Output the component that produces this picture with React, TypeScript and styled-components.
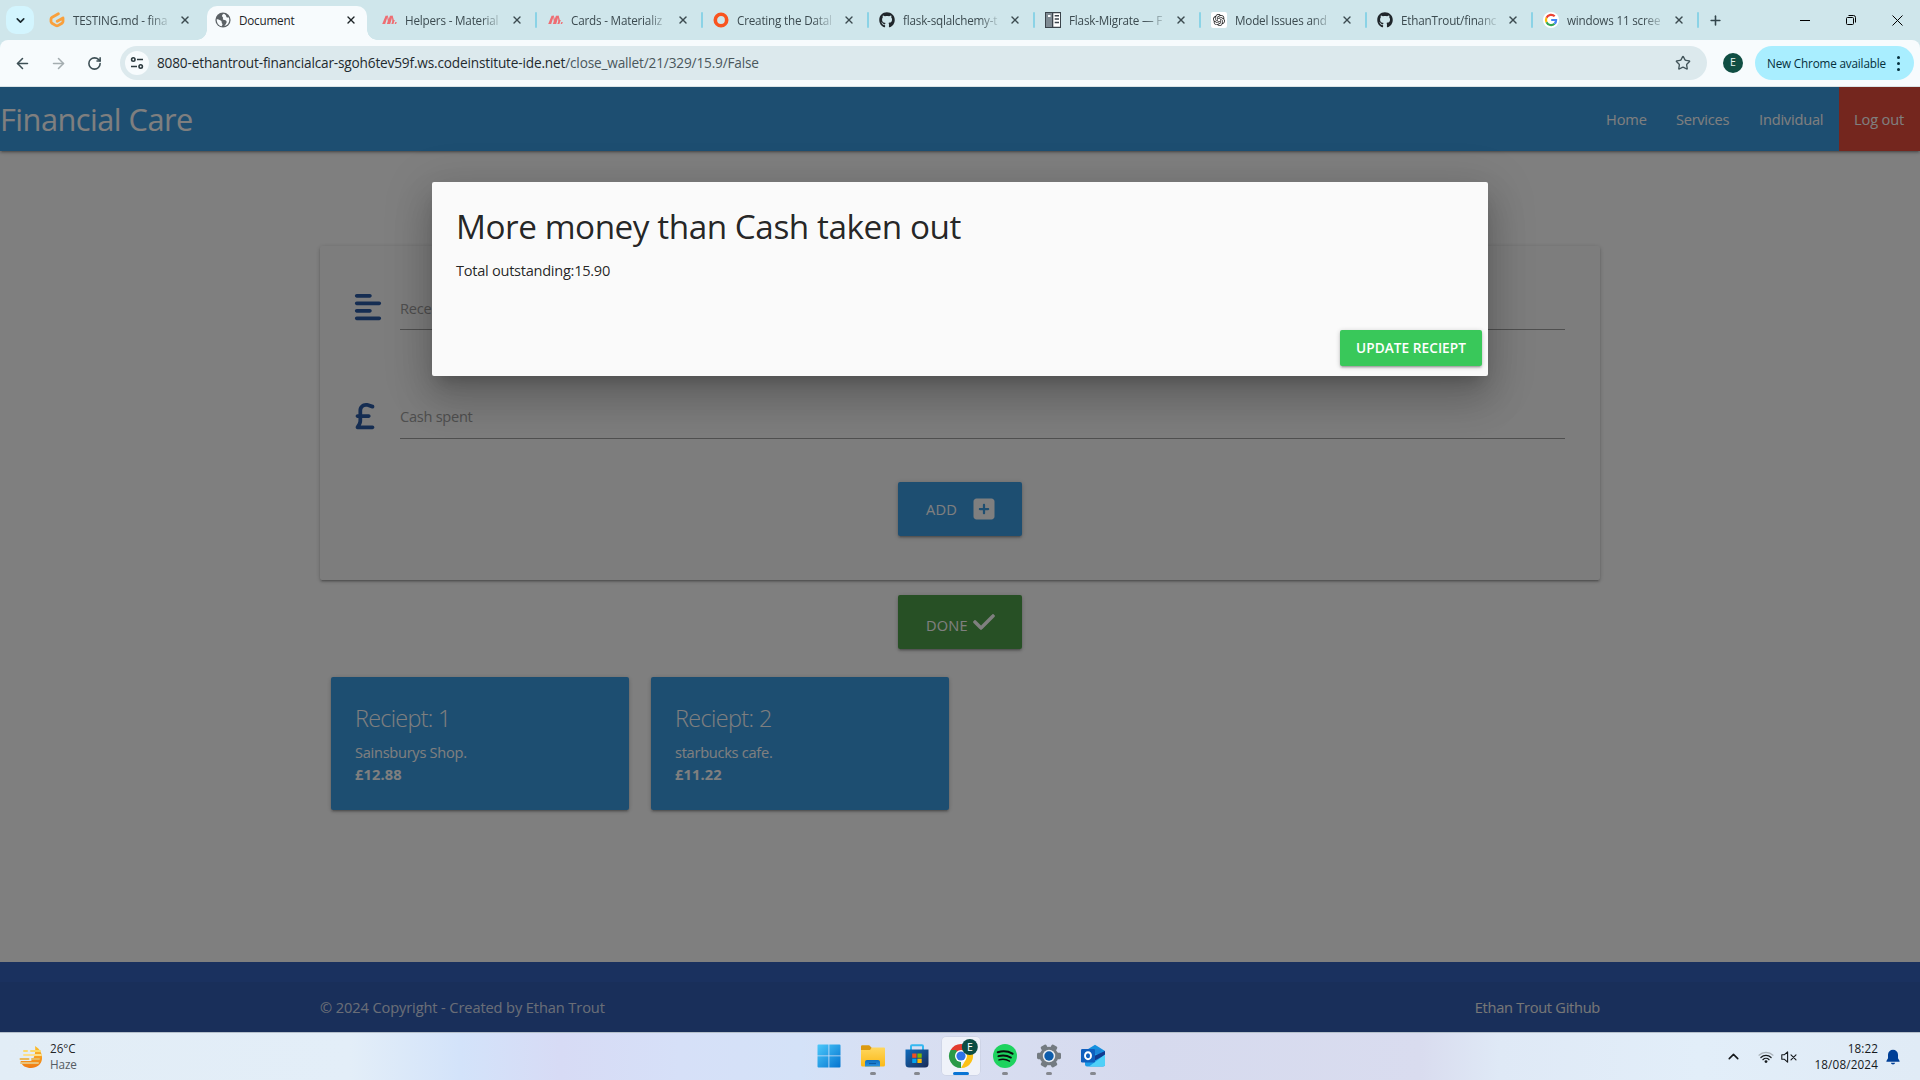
import React from "react";
import styled, { createGlobalStyle } from "styled-components";
import { FaAlignLeft, FaSterlingSign, FaSquarePlus, FaCheck, FaGithub } from "react-icons/fa6";
import { SiOpenai } from "react-icons/si";
import { ArrowLeft, ArrowRight, RotateCw, Star, ChevronDown, ChevronUp, Plus, X } from "lucide-react";

const Global = createGlobalStyle`
  *{box-sizing:border-box}
  html,body{margin:0;padding:0;overflow:hidden}
  body{font-family:"Segoe UI","Open Sans","Noto Sans",sans-serif;font-size:15px;line-height:22.5px;color:rgba(0,0,0,.87);width:1920px;height:1080px}
  svg{display:block;flex:none}
`;

/* Open Sans runs slightly larger than its nominal size, so text is scaled down a touch */
const T = styled.span<{ $s?: number; $ls?: number; $w?: number; $c?: string }>`
  font-size:${p => (p.$s ?? 15) * 0.975}px;
  letter-spacing:${p => p.$ls ?? -0.28}px;
  font-weight:${p => p.$w ?? 400};
  ${p => p.$c && `color:${p.$c};`}
  white-space:nowrap;
`;

const Screen = styled.div`width:1920px;height:1080px;display:flex;flex-direction:column;overflow:hidden;`;

/* browser chrome */
const TabStrip = styled.div`height:40px;background:#cfe6eb;display:flex;align-items:flex-end;padding-left:6px;`;
const TabSearch = styled.div`width:28px;height:28px;border-radius:10px;background:#d3f5fe;margin:0 4px 6px 0;display:flex;align-items:center;justify-content:center;color:#1b2a2f;`;
const TabSlot = styled.div<{ $sep?: boolean }>`
  width:166px;height:40px;padding:6px 3px 0;position:relative;
  ${p => p.$sep && `&::after{content:"";position:absolute;right:-1px;top:12px;width:2px;height:16px;background:#8bd3e6;border-radius:1px;}`}
`;
const TabBody = styled.div<{ $on?: boolean }>`
  height:34px;padding:0 8px 6px;display:flex;align-items:center;position:relative;border-radius:10px 10px 0 0;
  color:${p => (p.$on ? "#1d2427" : "#3c4b50")};
  background:${p => (p.$on ? "#f7fbfd" : "transparent")};
  ${p => p.$on && `
    &::before,&::after{content:"";position:absolute;bottom:0;width:10px;height:10px;}
    &::before{left:-10px;background:radial-gradient(circle at 0 0,transparent 9.5px,#f7fbfd 10px);}
    &::after{right:-10px;background:radial-gradient(circle at 100% 0,transparent 9.5px,#f7fbfd 10px);}
  `}
`;
const Favicon = styled.div`width:16px;height:16px;margin-right:8px;display:flex;align-items:center;justify-content:center;`;
const TabTitle = styled.div<{ $on?: boolean }>`
  width:97px;height:18px;line-height:17px;white-space:nowrap;margin-right:9px;
  ${p => !p.$on && "mask-image:linear-gradient(90deg,#000 76px,transparent 99px);"}
`;
const NewTab = styled.div`width:34px;height:40px;display:flex;align-items:center;justify-content:center;color:#33464c;`;
const WinButtons = styled.div`margin-left:auto;display:flex;height:40px;`;
const WinBtn = styled.div`width:46px;height:40px;display:flex;align-items:center;justify-content:center;`;

const ToolbarWrap = styled.div`height:47px;background:#cfe6eb;`;
const Toolbar = styled.div`height:47px;background:#f7fbfd;border-bottom:1px solid #d9e3e6;display:flex;align-items:center;border-radius:8px 8px 0 0;padding-left:4px;color:#42545a;`;
const NavBtn = styled.div<{ $dim?: boolean }>`width:36px;height:34px;display:flex;align-items:center;justify-content:center;color:${p => (p.$dim ? "#a4adb0" : "#3d4f55")};`;
const Omnibox = styled.div`width:1587px;height:34px;flex:none;border-radius:17px;margin-left:8px;background:#dce9ed;display:flex;align-items:center;padding:0 16px 0 5px;`;
const Tune = styled.div`width:24px;height:24px;border-radius:50%;background:#f7fbfd;margin-right:8px;display:flex;align-items:center;justify-content:center;`;
const Grow = styled.div`flex:1;`;
const Profile = styled.div`width:20px;height:20px;border-radius:50%;background:#104e43;margin:0 12px 0 16px;color:#e8f2f0;font-size:10.5px;line-height:19px;text-align:center;`;
const UpdatePill = styled.div`width:159px;height:34px;border-radius:17px;background:#a9eeff;display:flex;align-items:center;padding-left:12px;color:#05303c;`;
const Dots = styled.div`margin:0 14px 0 auto;display:grid;gap:3px;i{width:3px;height:3px;border-radius:50%;background:#05303c;}`;

/* site */
const Page = styled.div`height:945px;position:relative;background:#fff;overflow:hidden;display:flex;flex-direction:column;align-items:center;`;
const depth1 = "0 2px 2px 0 rgba(0,0,0,.14),0 3px 1px -2px rgba(0,0,0,.12),0 1px 5px 0 rgba(0,0,0,.2)";
const SiteNav = styled.nav`width:100%;height:64px;flex:none;background:#3b9ce2;color:#fff;display:flex;align-items:center;box-shadow:${depth1};`;
const Brand = styled.div`height:64px;line-height:65px;`;
const NavLink = styled.div<{ $w: number; $bg?: string }>`width:${p => p.$w}px;height:64px;padding-left:15px;line-height:64px;background:${p => p.$bg ?? "transparent"};`;
const FormCard = styled.section`width:1280px;height:334px;flex:none;margin-top:95px;background:#fafafa;border-radius:2px;box-shadow:${depth1};padding:47px 35px 0;display:flex;flex-direction:column;align-items:center;`;
const Field = styled.div`width:1210px;height:37px;display:flex;margin-bottom:72px;color:#2a5aa4;`;
const FieldIcon = styled.div<{ $pull: number }>`width:45px;svg{margin:-1px 0 0 -${p => p.$pull}px;}`;
const FieldInput = styled.div<{ $top: number }>`flex:1;border-bottom:1px solid #9e9e9e;color:#9e9e9e;padding-top:${p => p.$top}px;`;
const BigBtn = styled.div<{ $bg: string }>`width:124px;height:54px;flex:none;border-radius:2px;background:${p => p.$bg};color:#fff;box-shadow:${depth1};display:flex;align-items:center;justify-content:space-between;padding:0 26.5px 0 28px;`;
const AddRow = styled.div`margin-top:-29px;`;
const DoneRow = styled.div`margin-top:15px;path{stroke:currentColor;stroke-width:16px;}`;
const Lower = styled.div`padding-top:6px;display:flex;`;
const Receipts = styled.section`width:1280px;display:flex;margin-top:28px;padding:0 11px;gap:22px;`;
const Receipt = styled.div`width:298px;height:133px;border-radius:2px;background:#3b9ce2;color:#fff;box-shadow:${depth1};padding:24px;display:flex;flex-direction:column;line-height:22px;`;
const ReceiptTitle = styled.div`height:40px;line-height:34px;`;
const Footer = styled.footer`width:100%;height:70px;margin-top:auto;background:#3462bf;padding-top:20px;`;
const FooterBar = styled.div`height:50px;background:rgba(51,51,51,.08);padding:14px 320px 0;display:flex;justify-content:space-between;`;
const Overlay = styled.div`position:absolute;inset:0;background:rgba(0,0,0,.5);`;
const Modal = styled.div`position:absolute;left:432px;top:95px;width:1056px;height:194px;border-radius:2px;background:#fafafa;display:flex;flex-direction:column;box-shadow:0 24px 38px 3px rgba(0,0,0,.14),0 9px 46px 8px rgba(0,0,0,.12),0 11px 15px -7px rgba(0,0,0,.2);`;
const ModalBody = styled.div`height:138px;padding:24px;display:flex;flex-direction:column;gap:15px;`;
const ModalTitle = styled.div`height:38px;line-height:38px;padding-top:1px;`;
const ModalFoot = styled.div`height:56px;padding:10px 6px;display:flex;justify-content:flex-end;`;
const UpdateBtn = styled.div`width:142px;height:36px;border-radius:2px;background:#39c85a;color:#fff;line-height:35px;text-align:center;box-shadow:${depth1};`;

/* taskbar */
const Taskbar = styled.div`height:48px;border-top:1px solid #b5c0cb;display:flex;align-items:center;justify-content:space-between;
  background:linear-gradient(90deg,#e2edf6 0,#e3eef8 350px,#d3e3fa 460px,#d7dbf5 560px,#d6e0f8 680px,#d4e2f8 800px,#d8dff2 900px,#d6daee 1150px,#d9dcef 1420px,#dfe9f6 1500px,#e2eef9 1700px,#e0ebf6 1920px);`;
const Weather = styled.div`width:808px;height:47px;display:flex;align-items:center;padding-left:19px;gap:7px;`;
const Tray = styled.div`width:806px;height:47px;display:flex;align-items:center;justify-content:flex-end;padding-right:20px;color:#15191c;`;
const TrayIcons = styled.div`display:flex;align-items:center;gap:7px;margin:0 17px 0 16px;`;
const Lines = styled.div<{ $right?: boolean }>`display:flex;flex-direction:column;line-height:16px;padding-bottom:1px;text-align:${p => (p.$right ? "right" : "left")};`;
const Bell = styled.div`margin-left:8px;`;
const Apps = styled.div`display:flex;gap:6px;height:47px;padding-top:4px;`;
const AppTile = styled.div<{ $on?: boolean; $run?: boolean }>`
  width:38px;height:38px;border-radius:4px;display:flex;align-items:center;justify-content:center;position:relative;
  ${p => p.$on && "background:rgba(255,255,255,.6);box-shadow:0 0 0 .5px rgba(0,0,0,.08);"}
  ${p => p.$run && `&::after{content:"";position:absolute;bottom:0;left:50%;transform:translateX(-50%);height:3px;border-radius:2px;width:${p.$on ? 16 : 6}px;background:${p.$on ? "#0a74d4" : "#85888f"};}`}
`;

const Materialize = () => (
  <svg width="16" height="16" viewBox="0 0 16 16" fill="#ee6e73"><path d="M1.2 12 4.600 3.800h2.200L4.200 12zM5.800 12 9 3.800h2.600L9.200 12zM10.300 12l1.700-4h1.800l-1.400 4zM13.600 12l.8-2h1.400l-.7 2z" /><path d="M6 3.800h.8L8.300 9 7.200 11.500zM10.800 3.800h.8l1.200 4-1.300 3z" /></svg>
);
const Gitpod = () => (
  <svg width="16" height="16" viewBox="0 0 16 16" fill="none" stroke="#f9a03c" strokeWidth="2.800" strokeLinecap="round" strokeLinejoin="round"><path d="M9.400 1.800 3.200 5.200Q2 5.900 2 7v2.600q0 1 1 1.600l4 2.400q1 .5 2 0l4-2.400q1-.6 1-1.600V6L8.200 9.200" /></svg>
);
const Globe = () => (
  <svg width="16" height="16" viewBox="0 0 16 16"><circle cx="8" cy="8" r="7.600" fill="#5b6165" /><path d="M8.800 1.800C6.800 3 6.500 4 7.700 5.200c1.200 1-.8 1.700.8 2.600 1.500.6 2.800.3 3.100 1.800.3 1.800-1.200 3-2.300 4.500 3-.5 5-3.200 5-6.100 0-1-.2-2-.6-2.800-1.200.5-2.400.3-2.500-1 0-1-.9-1.600-2.400-2.400zM1.700 7.200c1.500 0 3.300.6 4.400 1.500s.1 2.100 1.200 3c.6.6-.3 1.900-.7 2.500-3-.6-5-3.200-4.900-7z" fill="#f7fbfd" /></svg>
);
const Ring = () => <svg width="16" height="16" viewBox="0 0 16 16"><ellipse cx="8" cy="8" rx="5.700" ry="5.800" fill="none" stroke="#f9541f" strokeWidth="3.600" /></svg>;
const Docs = () => (
  <svg width="16" height="16" viewBox="0 0 16 16"><path d="M0 0h16v16H0z" fill="#3b444b" /><path d="M1 1h6v14H1z" fill="#7f8b93" /><path d="M8.300 1.300H15v13.400H8.300zM3 3h2.500v2H3z" fill="#fff" /><path d="M9.700 3H14v1.400H9.700zM9.700 6.300H14v1.400H9.700zM9.700 9.800H14v1.400H9.700z" fill="#3b444b" /></svg>
);
const GptTile = styled.div`width:16px;height:16px;border-radius:2px;background:#fff;display:flex;align-items:center;justify-content:center;`;
const Gpt = () => <GptTile><SiOpenai size={12} color="#222" /></GptTile>;
const Google = () => (
  <svg width="16" height="16" viewBox="0 0 16 16"><circle cx="8" cy="8" r="8" fill="#fff" /><g fill="none" strokeWidth="2.200"><path d="M11.700 4.300A5.100 5.100 0 0 0 3.500 5.700" stroke="#ea4335" /><path d="M3.500 5.700a5.100 5.100 0 0 0 0 4.600" stroke="#fbbc05" /><path d="M3.500 10.300a5.100 5.100 0 0 0 8 1.500" stroke="#34a853" /><path d="M11.500 11.800A5 5 0 0 0 13.100 8H8.200" stroke="#4285f4" /></g></svg>
);
const Octo = () => <FaGithub size={16} color="#20262b" />;

const tabs: [string, () => React.ReactElement, boolean][] = [
  ["TESTING.md - fina", Gitpod, false],
  ["Document", Globe, false],
  ["Helpers - Material", Materialize, true],
  ["Cards - Materializ", Materialize, true],
  ["Creating the Datal", Ring, true],
  ["flask-sqlalchemy-t", Octo, true],
  ["Flask-Migrate — F", Docs, true],
  ["Model Issues and", Gpt, true],
  ["EthanTrout/financ", Octo, true],
  ["windows 11 scree", Google, true],
];

const WinLogo = () => (
  <svg width="24" height="24" viewBox="0 0 24 24"><defs><linearGradient id="wl" x1="0" y1="0" x2="1" y2="1"><stop offset="0" stopColor="#4cc9fb" /><stop offset="1" stopColor="#0473cf" /></linearGradient></defs><path fill="url(#wl)" d="M1.500.5h10v11H.5v-10a1 1 0 0 1 1-1zM12.300.5h10.200a1 1 0 0 1 1 1v10H12.300zM.5 12.300h11v11.200h-10a1 1 0 0 1-1-1zM12.300 12.300h11.200v10.200a1 1 0 0 1-1 1H12.300z" /></svg>
);
const Folder = () => (
  <svg width="24" height="24" viewBox="0 0 24 24"><defs><linearGradient id="fo" x1="0" y1="0" x2="0" y2="1"><stop offset="0" stopColor="#ffd75e" /><stop offset="1" stopColor="#fbb917" /></linearGradient><linearGradient id="fb" x1="0" y1="0" x2="0" y2="1"><stop offset="0" stopColor="#0f6fc0" /><stop offset="1" stopColor="#2a93e0" /></linearGradient></defs><path d="M0 2.500A1.200 1.200 0 0 1 1.200 1.300h7l2.500 2.500v4H0z" fill="#dc9a10" /><path d="M0 6h9l2-2.500h12a1 1 0 0 1 1 1V21a1.500 1.500 0 0 1-1.500 1.500h-21A1.500 1.500 0 0 1 0 21z" fill="url(#fo)" /><path d="M4 22.500V18a2 2 0 0 1 2-2h11a2 2 0 0 1 2 2v4.500z" fill="url(#fb)" /><path d="M8 19.500h7" stroke="#0a5aa5" strokeWidth="1.200" /></svg>
);
const Store = () => (
  <svg width="24" height="24" viewBox="0 0 24 24"><defs><linearGradient id="st" x1="0" y1="0" x2="1" y2="1"><stop offset="0" stopColor="#0f6cbd" /><stop offset="1" stopColor="#1b2a55" /></linearGradient></defs><path d="M6 6V2.200a1 1 0 0 1 1-1h10a1 1 0 0 1 1 1V6" fill="none" stroke="#35b8f1" strokeWidth="2" /><path d="M.5 5.500h23V20a3.500 3.500 0 0 1-3.500 3.500H4A3.500 3.500 0 0 1 .5 20z" fill="url(#st)" /><path d="M7.200 9.500h4.300v4.300H7.200z" fill="#f25022" /><path d="M12.400 9.500h4.300v4.300h-4.300z" fill="#7fba00" /><path d="M7.200 14.700h4.300V19H7.200z" fill="#00a4ef" /><path d="M12.400 14.700h4.300V19h-4.300z" fill="#ffb900" /></svg>
);
const Chrome = () => (
  <svg width="36" height="36" viewBox="-2 -2 36 36"><path d="M16 16 5.600 10A12 12 0 0 1 26.400 10z" fill="#e33b2e" /><path d="M16 16V28A12 12 0 0 1 5.600 10z" fill="#2a9a47" /><path d="M16 10h10.400A12 12 0 0 1 16 28l5.200-9z" fill="#fbc116" /><path d="M5.600 10 11 19l5-3-5-6z" fill="#2a9a47" /><circle cx="16" cy="16" r="6" fill="#fff" /><circle cx="16" cy="16" r="4.600" fill="#2f72e8" /><circle cx="24.800" cy="7" r="8" fill="#0b4d43" /><text x="24.900" y="10.800" textAnchor="middle" fontSize="10.500" fontFamily="Open Sans" fill="#fff">E</text></svg>
);
const Spotify = () => (
  <svg width="24" height="24" viewBox="0 0 24 24"><circle cx="12" cy="12" r="12" fill="#1ed35f" /><g fill="none" stroke="#0a0f0c" strokeLinecap="round"><path d="M4.800 8.200c5-1.500 10.500-1 14.700 1.400" strokeWidth="2.200" /><path d="M5.400 12.200c4.300-1.200 8.800-.7 12.500 1.400" strokeWidth="1.900" /><path d="M6 15.900c3.700-1 7.300-.6 10.500 1.200" strokeWidth="1.500" /></g></svg>
);
const Gear = () => (
  <svg width="24" height="24" viewBox="0 0 24 24"><g fill="#747b81">{[30, 90, 150].map(a => <rect key={a} x="8.800" y="0" width="6.400" height="24" rx="1.400" transform={`rotate(${a} 12 12)`} />)}<circle cx="12" cy="12" r="9.300" /></g><circle cx="12" cy="12" r="6.200" fill="#e8ecf2" /><circle cx="12" cy="12" r="4.700" fill="#0d5cab" /></svg>
);
const Outlook = () => (
  <svg width="24" height="24" viewBox="0 0 24 24"><path d="M4 7 14 .8 24 7v4H4z" fill="#1490df" /><path d="M6 5h14v10H6z" fill="#1c86d8" /><path d="M4 10h20v10.500a2 2 0 0 1-2 2H6a2 2 0 0 1-2-2z" fill="#1a9be8" /><path d="M24 7v4L13 17l-2-4z" fill="#123b8f" /><path d="M24 10.500V20.500a2 2 0 0 1-2 2H8z" fill="#4fd0f8" /><rect y="5" width="14" height="13.500" rx="1.300" fill="#0f5fbe" /><ellipse cx="7" cy="11.700" rx="3" ry="3.500" fill="none" stroke="#fff" strokeWidth="1.900" /></svg>
);
const Haze = () => (
  <svg width="24" height="24" viewBox="0 0 24 24"><defs><linearGradient id="hz" x1="0" y1="0" x2="0" y2="1"><stop offset="0" stopColor="#fbc02d" /><stop offset="1" stopColor="#f07a13" /></linearGradient></defs><path d="M16 1c5 3 7.500 8 7 13-.7 5.500-5 9-11 9-5 0-9-2-10.500-7h10C15 15 17 8 16 1z" fill="url(#hz)" /><g strokeWidth="2" strokeLinecap="round"><path d="M5 6h3M12 6h9" stroke="#fbd96a" /><path d="M5 10h17" stroke="#fde08a" /><path d="M1.500 14h8M13 14h7" stroke="#e9b95c" /><path d="M2 18h17" stroke="#e9c27a" /></g></svg>
);
const Wifi = () => (
  <svg width="16" height="14" viewBox="0 0 16 14" fill="none" strokeWidth="1.200" strokeLinecap="round"><path d="M1 5.200a10 10 0 0 1 14 0" stroke="#a9b1b8" /><path d="M2.900 7.500a7.300 7.300 0 0 1 10.200 0M4.900 9.700a4.400 4.400 0 0 1 6.200 0" stroke="#15191c" /><circle cx="8" cy="11.600" r="1.400" fill="#15191c" /></svg>
);
const Muted = () => (
  <svg width="16" height="14" viewBox="0 0 16 14" fill="none" stroke="#15191c" strokeWidth="1.100" strokeLinejoin="round" strokeLinecap="round"><path d="M.8 4.800h2.400L6.600 1.800v10.400L3.200 9.200H.8zM10 4.800l5 5M15 4.800l-5 5" /></svg>
);
const BellIcon = () => (
  <svg width="14" height="16" viewBox="0 0 14 16" fill="#003f96"><path d="M7 .8a5 5 0 0 1 5 5v3.400l1.600 2.900a.4.400 0 0 1-.4.600H.8a.4.400 0 0 1-.4-.6L2 9.200V5.800a5 5 0 0 1 5-5zM4.800 13.800h4.400a2.300 2.300 0 0 1-4.400 0z" /></svg>
);

export default function App() {
  return (
    <>
      <Global />
      <Screen>
        <TabStrip>
          <TabSearch><ChevronDown size={13} strokeWidth={3} /></TabSearch>
          {tabs.map(([title, Icon, sep], i) => (
            <TabSlot key={i} $sep={sep}>
              <TabBody $on={i === 1}>
                <Favicon><Icon /></Favicon>
                <TabTitle $on={i === 1}><T $s={12} $ls={-0.2}>{title}</T></TabTitle>
                <X size={12} strokeWidth={2.800} />
              </TabBody>
            </TabSlot>
          ))}
          <NewTab><Plus size={15} strokeWidth={2.500} /></NewTab>
          <WinButtons>
            <WinBtn><svg width="10" height="10"><path d="M0 5.500h10" stroke="#000" /></svg></WinBtn>
            <WinBtn><svg width="10" height="10" fill="none" stroke="#000"><rect x=".5" y="2.500" width="7" height="7" rx="1" /><path d="M2.500.5h5a2 2 0 0 1 2 2v5" /></svg></WinBtn>
            <WinBtn><svg width="11" height="11" stroke="#000"><path d="M.5.5l10 10M10.500.5l-10 10" /></svg></WinBtn>
          </WinButtons>
        </TabStrip>
        <ToolbarWrap>
          <Toolbar>
            <NavBtn><ArrowLeft size={17} strokeWidth={2.200} /></NavBtn>
            <NavBtn $dim><ArrowRight size={17} strokeWidth={2.200} /></NavBtn>
            <NavBtn><RotateCw size={15} strokeWidth={2.500} /></NavBtn>
            <Omnibox>
              <Tune><svg width="14" height="14" viewBox="0 0 14 14" fill="none" stroke="#2c3a3f" strokeWidth="1.600"><circle cx="3.300" cy="3.500" r="1.700" /><path d="M7 3.500h6M1 10.500h6" /><circle cx="10.700" cy="10.500" r="1.700" /></svg></Tune>
              <T $s={14} $ls={-0.175} $c="#1f2a2e">8080-ethantrout-financialcar-sgoh6tev59f.ws.codeinstitute-ide.net<T $s={14} $ls={-0.175} $c="#4a575c">/close_wallet/21/329/15.9/False</T></T>
              <Grow />
              <Star size={16} strokeWidth={2} />
            </Omnibox>
            <Profile>E</Profile>
            <UpdatePill><T $s={12} $ls={-0.16}>New Chrome available</T><Dots><i /><i /><i /></Dots></UpdatePill>
          </Toolbar>
        </ToolbarWrap>

        <Page>
          <SiteNav>
            <Brand><T $s={31.5} $ls={-0.5}>Financial Care</T></Brand>
            <Grow />
            <NavLink $w={70}><T $ls={-0.12}>Home</T></NavLink>
            <NavLink $w={83}><T $ls={-0.28}>Services</T></NavLink>
            <NavLink $w={95}><T $ls={-0.2}>Individual</T></NavLink>
            <NavLink $w={81} $bg="#e84c3d"><T $ls={-0.14}>Log out</T></NavLink>
          </SiteNav>
          <FormCard>
            <Field><FieldIcon $pull={2}><FaAlignLeft size={30} /></FieldIcon><FieldInput $top={4}><T>Rece</T></FieldInput></Field>
            <Field><FieldIcon $pull={5.5}><FaSterlingSign size={30} /></FieldIcon><FieldInput $top={3}><T>Cash spent</T></FieldInput></Field>
            <AddRow><BigBtn $bg="#3b9ce2"><T $ls={0.25}>ADD</T><FaSquarePlus size={24} /></BigBtn></AddRow>
          </FormCard>
          <DoneRow><BigBtn $bg="#4fa14a"><Lower><T $ls={0.2}>DONE</T></Lower><FaCheck size={24} /></BigBtn></DoneRow>
          <Receipts>
            <Receipt><ReceiptTitle><T $s={24} $w={300} $ls={-0.7}>Reciept: 1</T></ReceiptTitle><T>Sainsburys Shop.</T><T $w={700} $ls={0.15}>£12.88</T></Receipt>
            <Receipt><ReceiptTitle><T $s={24} $w={300} $ls={-0.6}>Reciept: 2</T></ReceiptTitle><T>starbucks cafe.</T><T $w={700} $ls={0.15}>£11.22</T></Receipt>
          </Receipts>
          <Footer><FooterBar><T $ls={-0.11} $c="rgba(255,255,255,.8)">© 2024 Copyright - Created by Ethan Trout</T><T $c="#eee">Ethan Trout Github</T></FooterBar></Footer>
          <Overlay />
          <Modal>
            <ModalBody>
              <ModalTitle><T $s={34.2} $ls={-0.47}>More money than Cash taken out</T></ModalTitle>
              <T>Total outstanding:15.90</T>
            </ModalBody>
            <ModalFoot><UpdateBtn><T $s={14} $w={600} $ls={0.05}>UPDATE RECIEPT</T></UpdateBtn></ModalFoot>
          </Modal>
        </Page>

        <Taskbar>
          <Weather><Haze /><Lines><T $s={12} $ls={0}>26°C</T><T $s={12} $ls={-0.1} $c="#555c63">Haze</T></Lines></Weather>
          <Apps>
            <AppTile><WinLogo /></AppTile>
            <AppTile $run><Folder /></AppTile>
            <AppTile $run><Store /></AppTile>
            <AppTile $run $on><Chrome /></AppTile>
            <AppTile $run><Spotify /></AppTile>
            <AppTile $run><Gear /></AppTile>
            <AppTile $run><Outlook /></AppTile>
          </Apps>
          <Tray>
            <ChevronUp size={17} strokeWidth={2.200} />
            <TrayIcons><Wifi /><Muted /></TrayIcons>
            <Lines $right><T $s={12} $ls={0.1}>18:22</T><T $s={12} $ls={0.15}>18/08/2024</T></Lines>
            <Bell><BellIcon /></Bell>
          </Tray>
        </Taskbar>
      </Screen>
    </>
  );
}
